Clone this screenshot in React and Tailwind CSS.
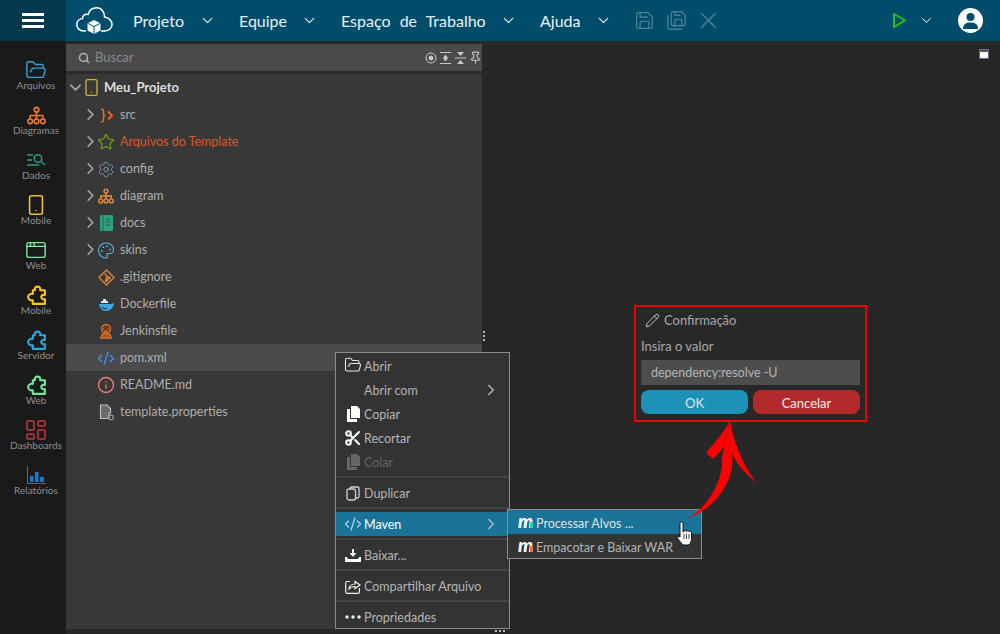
import {
  AppWindow, ChevronDown, ChevronRight, CodeXml, FolderOpen, Info,
  LayoutDashboard, Palette, Pencil, Pin, Save, SaveAll, Scissors, Settings,
  Smartphone, Star, Search,
} from "lucide-react";

const font = { fontFamily: '"Lato", "Noto Sans", sans-serif' };

function CloudLogo() {
  return (
    <svg width="37" height="30" viewBox="0 0 37 30" fill="none" stroke="#fff" strokeWidth="1.5">
      <path d="M10 25H8C3 25 .8 21.5 .8 18.5 .8 15 3.5 12.8 6.5 12.5 6.5 9 9.5 7.5 12 8.5 13.5 4 17 1.8 20.5 1.8 25.5 1.8 28.5 6 28.5 11 33 11.5 36 15 36 18.5 36 22 33 25 29 25H25" />
      <path d="M18 14l6.5 3.2v7.3L18 28l-6.500-3.500v-7.300z" fill="#fff" stroke="none" />
      <path d="M11.500 17.200L18 20.500l6.500-3.300M18 20.500V28" stroke="#004d6b" strokeWidth="1" />
    </svg>
  );
}

function BurgerIcon() {
  return (
    <svg width="22" height="15" viewBox="0 0 22 15" fill="#fff">
      <rect width="22" height="3" />
      <rect y="6" width="22" height="3" />
      <rect y="12" width="22" height="3" />
    </svg>
  );
}

function DataIcon() {
  return (
    <svg width="20" height="14" viewBox="0 0 20 14" fill="none" stroke="#2d9c86" strokeWidth="1.400">
      <path d="M1 2h6M1 7h5M1 12h12" />
      <circle cx="12" cy="5.500" r="3.800" />
      <path d="M15 8.500l4 3.500" />
    </svg>
  );
}

function ReportIcon() {
  return (
    <svg width="20" height="20" viewBox="0 0 20 20" fill="#1976d2">
      <path d="M1 1h1v17h18v1H1z" />
      <rect x="4" y="11" width="3.500" height="6" />
      <rect x="9" y="7" width="3.500" height="10" />
      <rect x="14" y="12" width="4" height="5" />
    </svg>
  );
}

function OrgIcon({ size, color }) {
  return (
    <svg width={size} height={size} viewBox="0 0 18 18" fill="none" stroke={color} strokeWidth="1.500">
      <circle cx="9" cy="3.500" r="2.200" />
      <circle cx="3" cy="14.500" r="2.200" />
      <circle cx="9" cy="14.500" r="2.200" />
      <circle cx="15" cy="14.500" r="2.200" />
      <path d="M9 5.700v6.600M3 12.300V9h12v3.300" />
    </svg>
  );
}

function PuzzleIcon({ color }) {
  return (
    <svg width="21" height="21" viewBox="0 0 20 20" fill="none" stroke={color} strokeWidth="2" strokeLinejoin="round">
      <path d="M8.500 5C8 3 9 1.500 11 1.500S14 3 13.500 5H18V9.500C16 9 14.500 10 14.500 11.500S16 14 18 13.500V18H6.500V14.500C4.500 15 2 14 2 11.500S4.500 8 6.500 8.500V5Z" />
    </svg>
  );
}

function BookIcon() {
  return (
    <svg width="13" height="16" viewBox="0 0 13 16">
      <rect width="13" height="16" rx="1" fill="#2f9f84" />
      <rect x="2.500" width="1" height="16" fill="#1d6b58" />
      <path d="M5.500 4h5M5.500 7h5M5.500 10h5" stroke="#1d5f4f" strokeWidth="1.200" />
    </svg>
  );
}

function MavenIcon({ dot }) {
  return (
    <span className="relative flex h-3 w-[15px] items-center justify-center text-[19px] font-black italic leading-none text-white">
      <span className="-mt-[4px]">m</span>
      <span className={`absolute bottom-0 right-0 h-[6px] w-[3px] ${dot}`} />
    </span>
  );
}

function JenkinsIcon() {
  return (
    <svg width="16" height="16" viewBox="0 0 16 16" fill="none" stroke="#d9722a" strokeWidth="1.300">
      <circle cx="8" cy="6" r="4.500" fill="#6b3a18" />
      <path d="M5 6h1M9.500 6h1M6 8.500h4" />
      <path d="M3 15c0-3 1.500-4.500 5-4.500s5 1.500 5 4.500z" fill="#a8531d" />
    </svg>
  );
}

function DockerIcon() {
  return (
    <svg width="17" height="15" viewBox="0 0 17 15">
      <path d="M5 2h3v2h2v2H5zM3 4h2v2H3z" fill="#cfe9f8" />
      <path d="M1 7h12c1 0 2-1 3-1-.3 4-3 8-7.500 8S1.500 11 1 7z" fill="#3fa5e0" />
      <path d="M4 10c1 1.500 3 2 5 1.500" stroke="#2b2b2b" fill="none" />
    </svg>
  );
}

function GitIcon() {
  return (
    <svg width="17" height="17" viewBox="0 0 17 17" fill="none" stroke="#d9813a" strokeWidth="1.400">
      <path d="M8.500 1L16 8.500 8.500 16 1 8.500z" />
      <path d="M6.500 4.500l5 5M8.500 6.500v5" />
      <circle cx="8.500" cy="11.500" r="1" fill="#d9813a" />
      <circle cx="11" cy="9" r="1" fill="#d9813a" />
    </svg>
  );
}

function SrcIcon() {
  return (
    <svg width="13" height="15" viewBox="0 0 13 15" fill="none" strokeWidth="1.600">
      <path d="M1 1c2.500 0 2.500 1 2.500 2.500v2.500c0 1 .5 1.500 1.500 1.500-1 0-1.500.5-1.500 1.500v2.500c0 1.500 0 2.500-2.500 2.500" stroke="#d8781f" />
      <path d="M8 3.500L12 7.500 8 11.500" stroke="#e2622b" strokeWidth="2" />
    </svg>
  );
}

function PropsFileIcon() {
  return (
    <svg width="15" height="17" viewBox="0 0 15 17" fill="none">
      <path d="M1.500 1h6.500l3.500 3.500V9H10v5.500H1.500z" fill="#6a6a6a" stroke="#bdbdbd" strokeWidth="1.200" />
      <circle cx="12" cy="13.500" r="2.300" stroke="#999999" strokeWidth="1.200" />
    </svg>
  );
}

function StackIcon({ color }) {
  return (
    <svg width="15" height="16" viewBox="0 0 15 16" fill={color}>
      <path d="M1 3h3v10h7v3H1z" />
      <path d="M5 0h6l3 3v9H5z" />
    </svg>
  );
}

function DupIcon() {
  return (
    <svg width="14" height="15" viewBox="0 0 14 15" fill="none" stroke="#d0d0d0" strokeWidth="1.300">
      <rect x="1" y="3" width="8.500" height="11" rx="2" />
      <path d="M4 3V2.500A1.500 1.500 0 0 1 5.500 1h6A1.500 1.500 0 0 1 13 2.500v8a1.500 1.500 0 0 1-1.500 1.500H9.500" />
    </svg>
  );
}

function DownloadIcon() {
  return (
    <svg width="16" height="13" viewBox="0 0 16 13" fill="#fff">
      <path d="M7 0h2v4h2.500L8 8 4.500 4H7z" />
      <path d="M0 8h2c0 1.500 1 2 2 2h8c1 0 2-.5 2-2h2v5H0z" />
    </svg>
  );
}

function ShareIcon() {
  return (
    <svg width="16" height="15" viewBox="0 0 16 15" fill="none" stroke="#f0f0f0" strokeWidth="1.200">
      <path d="M5 2.500H2A1.500 1.500 0 0 0 .7 4v9A1.500 1.500 0 0 0 2 14.400h11a1.500 1.500 0 0 0 1.400-1.400V9" />
      <path d="M4 10c0-3 2.500-5 6-5V2.500L15 6l-5 3.500V7.500c-3 0-5 1-6 2.500z" />
    </svg>
  );
}

function DotsIcon() {
  return (
    <svg width="16" height="4" viewBox="0 0 16 4" fill="#f0f0f0">
      <circle cx="2" cy="2" r="1.700" />
      <circle cx="8" cy="2" r="1.700" />
      <circle cx="14" cy="2" r="1.700" />
    </svg>
  );
}

const sideItems = [
  { label: "Arquivos", icon: <FolderOpen size={22} color="#3b9fd8" strokeWidth={1.500} /> },
  { label: "Diagramas", icon: <OrgIcon size={19} color="#ee7d2a" /> },
  { label: "Dados", icon: <DataIcon /> },
  { label: "Mobile", icon: <Smartphone size={22} color="#f1c232" strokeWidth={1.700} /> },
  { label: "Web", icon: <AppWindow size={22} color="#7cecA0" strokeWidth={1.500} /> },
  { label: "Mobile", icon: <PuzzleIcon color="#f5c518" /> },
  { label: "Servidor", icon: <PuzzleIcon color="#2fa5dd" /> },
  { label: "Web", icon: <PuzzleIcon color="#6ee89a" /> },
  { label: "Dashboards", icon: <LayoutDashboard size={24} color="#c8393c" strokeWidth={1.500} /> },
  { label: "Relatórios", icon: <ReportIcon /> },
];

const treeItems = [
  { label: "src", folder: true, icon: <SrcIcon /> },
  { label: "Arquivos do Template", folder: true, orange: true, icon: <Star size={18} color="#6c9a1c" strokeWidth={1.800} /> },
  { label: "config", folder: true, icon: <Settings size={19} color="#7f9cc9" strokeWidth={1.200} /> },
  { label: "diagram", folder: true, icon: <OrgIcon size={16} color="#ee8d3a" /> },
  { label: "docs", folder: true, icon: <BookIcon /> },
  { label: "skins", folder: true, icon: <Palette size={19} color="#5fb6e6" strokeWidth={1.400} /> },
  { label: ".gitignore", icon: <GitIcon /> },
  { label: "Dockerfile", icon: <DockerIcon /> },
  { label: "Jenkinsfile", icon: <JenkinsIcon /> },
  { label: "pom.xml", active: true, icon: <CodeXml size={19} color="#4a8fe8" strokeWidth={1.800} /> },
  { label: "README.md", icon: <Info size={18} color="#ef7b7b" strokeWidth={1.800} /> },
  { label: "template.properties", icon: <PropsFileIcon /> },
];

const menuGroups = [
  [
    { label: "Abrir", icon: <FolderOpen size={18} className="-mt-[2px]" color="#e8e8e8" strokeWidth={1.400} /> },
    { label: "Abrir com", arrow: true },
    { label: "Copiar", icon: <StackIcon color="#ffffff" /> },
    { label: "Recortar", icon: <Scissors size={18} color="#fff" strokeWidth={2.800} /> },
    { label: "Colar", disabled: true, icon: <StackIcon color="#666666" /> },
  ],
  [{ label: "Duplicar", icon: <DupIcon /> }],
  [{ label: "Maven", arrow: true, active: true, icon: <CodeXml size={18} color="#a9dcf5" strokeWidth={1.700} /> }],
  [{ label: "Baixar...", icon: <DownloadIcon /> }],
  [{ label: "Compartilhar Arquivo", icon: <ShareIcon /> }],
  [{ label: "Propriedades", icon: <DotsIcon /> }],
];

function ContextMenu() {
  return (
    <div className="absolute left-[335px] top-[352px] h-[277px] w-[175px] overflow-hidden border border-[#8c8c8c] bg-[#333333] pt-[1px]">
      {menuGroups.map((group, i) => (
        <div key={i} className={i > 0 ? "border-t-2 border-[#444444] pt-[3px] pb-[2px]" : "pb-[2px]"}>
          {group.map((item) => (
            <div
              key={item.label}
              className={`flex h-6 items-center pr-[9px] text-[12.500px] ${item.active ? "bg-[#1a7399] text-white" : item.disabled ? "text-[#666666]" : "text-[#b5b5b5]"}`}
            >
              <span className="flex w-7 shrink-0 items-center justify-center pl-[6px]">{item.icon}</span>
              <span className="flex-1 pt-[2px]">{item.label}</span>
              {item.arrow && <ChevronRight size={18} color="#bbbbbb" strokeWidth={1.800} />}
            </div>
          ))}
        </div>
      ))}
    </div>
  );
}

function SubMenu() {
  return (
    <div className="absolute left-[507px] top-[509px] w-[195px] border border-[#8c8c8c] bg-[#333333] text-[12.500px]">
      <div className="flex h-6 items-center gap-[3px] bg-[#1a7399] pl-[10px] text-[#e0e0e0]">
        <MavenIcon dot="bg-[#2dd4a8]" />
        <span className="pt-[4px]">Processar Alvos ...</span>
      </div>
      <div className="flex h-6 items-center gap-[3px] pl-[10px] text-[#b5b5b5]">
        <MavenIcon dot="bg-[#f0764a]" />
        <span className="pt-[4px]">Empacotar e Baixar WAR</span>
      </div>
    </div>
  );
}

function Confirm() {
  return (
    <div className="absolute left-[634px] top-[305px] flex h-[117px] w-[233px] flex-col border-2 border-[#ee0000] bg-[#282828] px-[5px] text-[13px]">
      <div className="flex h-[26px] items-center gap-[4px] pl-[4px] pt-[1px] text-[#a9a9a9]">
        <Pencil size={15} color="#cccccc" strokeWidth={1.500} />
        <span>Confirmação</span>
      </div>
      <div className="mt-[2px] h-[25px] leading-[22px] text-[#a9a9a9]">Insira o valor</div>
      <div className="flex h-[25px] items-center bg-[#4d4d4d] pl-[10px] pt-[2px] text-[12.500px] text-[#b5b5b5]">dependency:resolve -U</div>
      <div className="mt-[5px] flex gap-[5px]">
        <button className="h-6 flex-1 rounded-lg bg-[#1c92b8] pt-[4px] text-[#e6e6e6]">OK</button>
        <button className="h-6 flex-1 rounded-lg bg-[#b32a2a] pt-[4px] text-[#eeeeee]">Cancelar</button>
      </div>
    </div>
  );
}

function RedArrow() {
  return (
    <svg className="absolute left-[680px] top-[415px]" width="85" height="110" viewBox="0 0 85 110" fill="#ff0000">
      <path d="M6 104C30 92 44 62 42 42L50 5C52 22 62 50 77 68 62 56 55 46 52 38 56 64 36 94 6 104z" />
      <path d="M50 5L44 32 33 44 26 38C34 28 44 18 50 5z" />
    </svg>
  );
}

function HandCursor() {
  return (
    <svg className="absolute left-[676px] top-[521px]" width="18" height="26" viewBox="0 0 18 26">
      <path
        d="M4 2.500c0-2 3-2 3 0V11l1-.500c0-1.500 2.500-1.500 2.500 0 .3-1.300 2.500-1.200 2.500.300.5-1 2.500-.800 2.500.700v6c0 3-1.500 5.500-2.500 6.500H7c-1-1.500-5-5.500-5.500-7-.5-1.500 1-2.500 2.500-1z"
        fill="#fff"
        stroke="#111"
        strokeWidth="1"
      />
      <path d="M8 13v5M10.500 13v5M13 13v5" stroke="#111" strokeWidth=".8" />
    </svg>
  );
}

export default function App() {
  return (
    <div style={font} className="relative flex h-[634px] w-[1000px] flex-col overflow-hidden bg-[#272727]">
      {/* Header */}
      <div className="flex h-[41px] shrink-0 items-center bg-[#004d6b] text-white">
        <div className="flex h-full w-[66px] items-center justify-center bg-[#03384f]">
          <BurgerIcon />
        </div>
        <div className="ml-[10px] w-[57px]">
          <CloudLogo />
        </div>
        {[
          { label: "Projeto", w: "w-[106px]", extra: "" },
          { label: "Equipe", w: "w-[102px]", extra: "" },
          { label: "Espaço de Trabalho", w: "w-[199px]", extra: "[word-spacing:5px]" },
          { label: "Ajuda", w: "w-[95px]", extra: "" },
        ].map((m) => (
          <div key={m.label} className={`flex items-center ${m.w}`}>
            <span className={`text-[16px] text-[#e8f0f4] ${m.extra}`}>{m.label}</span>
            <ChevronDown size={17} strokeWidth={1.600} className="ml-auto mr-[23px]" color="#e8f0f4" />
          </div>
        ))}
        <div className="-ml-[1px] flex items-center gap-[11px] text-[#4b7f96]">
          <Save size={21} strokeWidth={1.500} />
          <SaveAll size={21} strokeWidth={1.500} />
          <svg width="21" height="21" viewBox="0 0 21 21" fill="none" stroke="currentColor" strokeWidth="1.500">
            <path d="M3 3l15 15M18 3L3 18" />
          </svg>
        </div>
        <div className="ml-auto flex items-center">
          <svg width="15" height="17" viewBox="0 0 15 17" fill="none" stroke="#22c41b" strokeWidth="2" strokeLinejoin="round">
            <path d="M2 2L13 8.500 2 15z" />
          </svg>
          <ChevronDown size={15} strokeWidth={1.600} className="ml-[12px]" color="#fff" />
          <div className="ml-[24px] mr-[17px] flex h-[25px] w-[25px] items-center justify-center overflow-hidden rounded-full bg-white">
            <svg width="17" height="18" viewBox="0 0 17 18" fill="#004d6b">
              <circle cx="8.500" cy="5" r="4" />
              <path d="M1 17c0-5 3-6.500 7.500-6.500S16 12 16 17z" />
            </svg>
          </div>
        </div>
      </div>

      <div className="flex min-h-0 flex-1">
        {/* Sidebar */}
        <div className="flex w-[66px] shrink-0 flex-col bg-[#1a1a1a] pl-[6px] pt-[5px]">
          {sideItems.map((s, i) => (
            <div key={i} className="flex h-[45px] flex-col items-center justify-end">
              <div className="flex h-[24px] items-center justify-center">{s.icon}</div>
              <span className="-mt-[3px] text-[10px] leading-[12px] text-[#8f8f8f]">{s.label}</span>
            </div>
          ))}
        </div>

        {/* File tree */}
        <div className="mt-[3px] mb-[5px] flex w-[416px] shrink-0 flex-col bg-[#383838]">
          <div className="flex h-[27px] shrink-0 items-center bg-[#4a4a4a] pl-[12px]">
            <Search size={12} color="#b5b5b5" strokeWidth={3} />
            <span className="ml-[5px] flex-1 text-[13px] text-[#8a8a8a]">Buscar</span>
            <div className="-mr-[1px] flex items-center text-[#c8c8c8]">
              <span className="flex w-[15px] justify-center">
                <svg width="12" height="12" viewBox="0 0 12 12" fill="none" stroke="currentColor"><circle cx="6" cy="6" r="5" /><circle cx="6" cy="6" r="2" fill="currentColor" /></svg>
              </span>
              <span className="flex w-[15px] justify-center">
                <svg width="13" height="12" viewBox="0 0 13 12" fill="currentColor"><path d="M1 0h11v1H1zM1 11h11v1H1zM6.500 2.500L9 6l-2.500 3.500L4 6z" /></svg>
              </span>
              <span className="flex w-[15px] justify-center">
                <svg width="13" height="12" viewBox="0 0 13 12" fill="currentColor"><path d="M3 0h7L6.500 4zM3 12h7L6.500 8zM1 5.500h11v1H1z" /></svg>
              </span>
              <span className="flex w-[15px] justify-center">
                <Pin size={13} />
              </span>
            </div>
          </div>
          <div className="h-[3px] shrink-0 bg-[#2b2b2b]" />
          <div className="flex h-[27px] items-center">
            <ChevronDown size={19} color="#aaaaaa" className="shrink-0" />
            <span className="ml-[-3px]"><Smartphone size={19} color="#d9ae32" strokeWidth={1.700} /></span>
            <span className="ml-[3px] text-[13px] font-bold text-[#dddddd]">Meu_Projeto</span>
          </div>
          {treeItems.map((t) => (
            <div key={t.label} className={`flex h-[27px] items-center ${t.active ? "bg-[#4a4a4a]" : ""}`}>
              <span className="ml-[17px] flex w-[14px] justify-center">
                {t.folder && <ChevronRight size={19} color="#aaaaaa" className="shrink-0" />}
              </span>
              <span className="mr-[5px] flex w-[18px] items-center justify-center pt-[1px]">{t.icon}</span>
              <span className={`pt-[2px] text-[12.500px] ${t.orange ? "text-[#d9582b]" : "text-[#aeaeae]"}`}>{t.label}</span>
            </div>
          ))}
        </div>

        {/* Resize handle */}
        <div className="flex flex-col items-center justify-center gap-[2px] pl-[1px] pb-[5px] pt-[2px]">
          <span className="h-[2px] w-[2px] bg-[#bbbbbb]" />
          <span className="h-[2px] w-[2px] bg-[#bbbbbb]" />
          <span className="h-[2px] w-[2px] bg-[#bbbbbb]" />
        </div>
      </div>

      {/* Bottom resize handle */}
      <div className="absolute left-[495px] top-[630px] flex gap-[2px]">
        <span className="h-[2px] w-[2px] bg-[#bbbbbb]" />
        <span className="h-[2px] w-[2px] bg-[#bbbbbb]" />
        <span className="h-[2px] w-[2px] bg-[#bbbbbb]" />
      </div>

      {/* Window toggle */}
      <div className="absolute left-[979px] top-[49px] h-[10px] w-[10px] border border-[#666688] bg-white">
        <div className="h-[2px] bg-[#555555]" />
      </div>

      <ContextMenu />
      <SubMenu />
      <Confirm />
      <RedArrow />
      <HandCursor />
    </div>
  );
}
